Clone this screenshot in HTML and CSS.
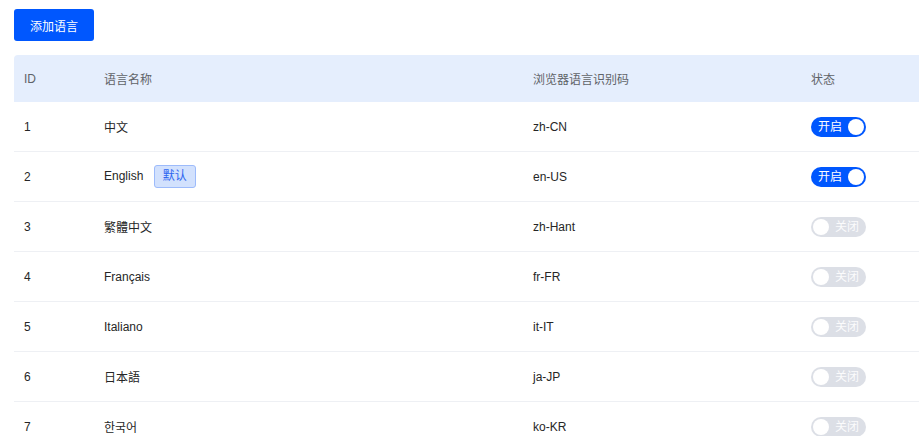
FILE: index.html
```html
<!DOCTYPE html>
<html lang="zh-CN">
<head>
    <meta charset="UTF-8">
    <title>语言管理</title>
    <link rel="stylesheet" href="styles.css">
</head>
<body>
    <div class="page">
        <button class="btn-primary">添加语言</button>

        <table class="lang-table">
            <colgroup>
                <col class="col-id">
                <col class="col-name">
                <col class="col-code">
                <col class="col-status">
            </colgroup>
            <thead>
                <tr>
                    <th>ID</th>
                    <th>语言名称</th>
                    <th>浏览器语言识别码</th>
                    <th>状态</th>
                </tr>
            </thead>
            <tbody>
                <tr>
                    <td>1</td>
                    <td>中文</td>
                    <td>zh-CN</td>
                    <td><span class="switch on"><span class="switch-text">开启</span><span class="knob"></span></span></td>
                </tr>
                <tr>
                    <td>2</td>
                    <td>English <span class="tag">默认</span></td>
                    <td>en-US</td>
                    <td><span class="switch on"><span class="switch-text">开启</span><span class="knob"></span></span></td>
                </tr>
                <tr>
                    <td>3</td>
                    <td>繁體中文</td>
                    <td>zh-Hant</td>
                    <td><span class="switch"><span class="knob"></span><span class="switch-text">关闭</span></span></td>
                </tr>
                <tr>
                    <td>4</td>
                    <td>Français</td>
                    <td>fr-FR</td>
                    <td><span class="switch"><span class="knob"></span><span class="switch-text">关闭</span></span></td>
                </tr>
                <tr>
                    <td>5</td>
                    <td>Italiano</td>
                    <td>it-IT</td>
                    <td><span class="switch"><span class="knob"></span><span class="switch-text">关闭</span></span></td>
                </tr>
                <tr>
                    <td>6</td>
                    <td>日本語</td>
                    <td>ja-JP</td>
                    <td><span class="switch"><span class="knob"></span><span class="switch-text">关闭</span></span></td>
                </tr>
                <tr>
                    <td>7</td>
                    <td>한국어</td>
                    <td>ko-KR</td>
                    <td><span class="switch"><span class="knob"></span><span class="switch-text">关闭</span></span></td>
                </tr>
            </tbody>
        </table>
    </div>
</body>
</html>
```

FILE: styles.css
```css
body {
    margin: 0;
    background: #fff;
    font-family: "Liberation Sans", "Noto Sans CJK SC", sans-serif;
    font-size: 12px;
    color: #262626;
    overflow: hidden;
}
.page {
    padding: 9px 0 0 14px;
}
.btn-primary {
    display: block;
    width: 80px;
    height: 32px;
    background: #0057fe;
    color: #fff;
    border: none;
    border-radius: 3px;
    font-family: inherit;
    font-size: 12px;
    cursor: pointer;
    padding: 0;
}
.lang-table {
    margin-top: 14px;
    width: 905px;
    table-layout: fixed;
    border-collapse: collapse;
}
.col-id { width: 80px; }
.col-name { width: 429px; }
.col-code { width: 278px; }
.col-status { width: 118px; }
.lang-table th {
    background: #e5eefd;
    color: #5f6368;
    font-weight: normal;
    text-align: left;
    height: 47px;
    padding: 0 10px;
}
.lang-table th:first-child {
    border-top-left-radius: 4px;
}
.lang-table td {
    height: 49px;
    padding: 0 10px;
    border-bottom: 1px solid #eef0f4;
}
.tag {
    display: inline-block;
    margin-left: 7px;
    width: 40px;
    height: 21px;
    line-height: 21px;
    text-align: center;
    background: #d2e1fd;
    border: 1px solid #9dbbfb;
    border-radius: 3px;
    color: #2f66f0;
    vertical-align: middle;
}
.switch {
    display: inline-flex;
    align-items: center;
    justify-content: space-between;
    box-sizing: border-box;
    width: 55px;
    height: 20px;
    border-radius: 10px;
    padding: 0 2px 0 7px;
    background: #0057fe;
    vertical-align: middle;
}
.switch .switch-text {
    color: #fff;
    font-size: 12px;
    line-height: 20px;
}
.switch .knob {
    width: 16px;
    height: 16px;
    border-radius: 50%;
    background: #fff;
}
.switch:not(.on) {
    background: #dcdfe6;
    padding: 0 7px 0 2px;
}
.switch:not(.on) .switch-text {
    color: #fbfbfc;
}
```
